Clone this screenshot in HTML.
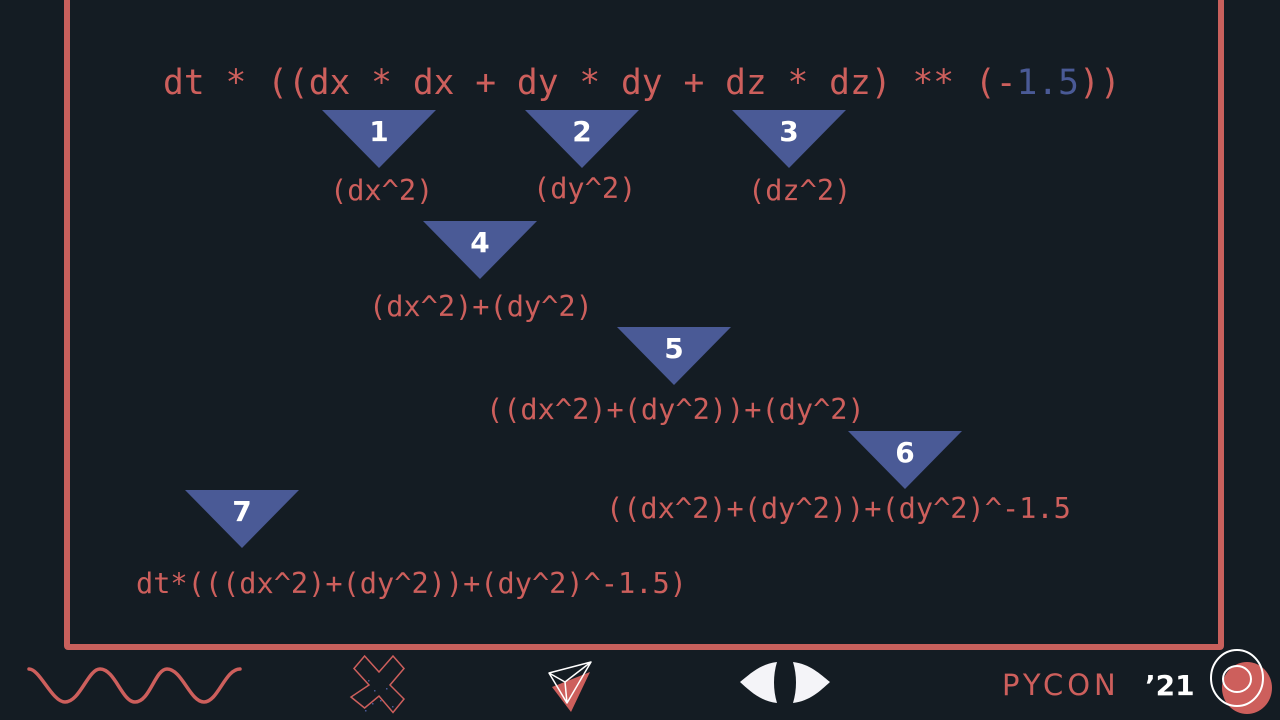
<!DOCTYPE html>
<html><head><meta charset="utf-8"><style>
html,body{margin:0;padding:0;background:#141c23;width:1280px;height:720px;overflow:hidden;position:relative;font-family:"DejaVu Sans Mono","Liberation Mono",monospace;}
.frame{position:absolute;left:64px;top:-10px;width:1148px;height:648px;border:6px solid #c8605c;border-radius:4px;}
.t{position:absolute;color:#cd5f5c;white-space:pre;line-height:1;}
.main{font-size:34.6px;left:163px;top:66px;}
.lbl{font-size:28.6px;}
.tri{position:absolute;width:0;height:0;border-left:57px solid transparent;border-right:57px solid transparent;border-top:58px solid #4a5a96;}
.n{position:absolute;width:114px;text-align:center;color:#fff;font:bold 28px "DejaVu Sans","Liberation Sans",sans-serif;}
.b{color:#4a5a96}
</style></head><body>
<div class="frame"></div>
<div class="t main">dt * ((dx * dx + dy * dy + dz * dz) ** (-<span class="b">1.5</span>))</div>

<div class="tri" style="left:322px;top:110px"></div><div class="n" style="left:322px;top:115px">1</div>
<div class="tri" style="left:525px;top:110px"></div><div class="n" style="left:525px;top:115px">2</div>
<div class="tri" style="left:732px;top:110px"></div><div class="n" style="left:732px;top:115px">3</div>
<div class="tri" style="left:423px;top:221px"></div><div class="n" style="left:423px;top:226px">4</div>
<div class="tri" style="left:617px;top:327px"></div><div class="n" style="left:617px;top:332px">5</div>
<div class="tri" style="left:848px;top:431px"></div><div class="n" style="left:848px;top:436px">6</div>
<div class="tri" style="left:185px;top:490px"></div><div class="n" style="left:185px;top:495px">7</div>

<div class="t lbl" style="left:330px;top:176px">(dx^2)</div>
<div class="t lbl" style="left:533px;top:174px">(dy^2)</div>
<div class="t lbl" style="left:748px;top:176px">(dz^2)</div>
<div class="t lbl" style="left:369px;top:292px">(dx^2)+(dy^2)</div>
<div class="t lbl" style="left:486px;top:395px">((dx^2)+(dy^2))+(dy^2)</div>
<div class="t lbl" style="left:606px;top:494px">((dx^2)+(dy^2))+(dy^2)^-1.5</div>
<div class="t lbl" style="left:136px;top:569px">dt*(((dx^2)+(dy^2))+(dy^2)^-1.5)</div>

<svg style="position:absolute;left:0;top:0" width="1280" height="720">
<path d="M29 669 C40 669 52 702 65 702 C80 702 88 669 100 669 C115 669 122 702 135 702 C150 702 155 669 167 669 C182 669 190 702 204 702 C218 702 225 669 240 669" fill="none" stroke="#cd5f5c" stroke-width="3.5" stroke-linecap="round"/>
<polygon points="364.6,656 379,672 393,656 404,668.5 390,685 404,699 393,712.5 379,696 364.6,708 351,697 369,685 354,668.5" fill="none" stroke="#cd5f5c" stroke-width="1.5"/>
<g fill="#4a5a96"><rect x="368" y="680" width="1.5" height="1.5"/><rect x="374" y="690" width="1.5" height="1.5"/><rect x="386" y="688" width="1.5" height="1.5"/><rect x="380" y="700" width="1.5" height="1.5"/><rect x="365" y="710" width="1.5" height="1.5"/><rect x="392" y="706" width="1.5" height="1.5"/><rect x="372" y="703" width="1.5" height="1.5"/></g>
<polygon points="552,687 590,672 571,712" fill="#cd5f5c"/>
<path d="M549 673 L591 662 L567 703 Z M549 673 L565 682 L591 662 M565 682 L567 703" fill="none" stroke="#fff" stroke-width="1.5" stroke-linejoin="round"/>
<path d="M777 662 C760 664 750 674 740 682 C750 691 760 701 777 703 C773 690 773 675 777 662 Z" fill="#f4f4f8"/>
<path d="M793 662 C810 664 820 674 830 682 C820 691 810 701 793 703 C797 690 797 675 793 662 Z" fill="#f4f4f8"/>
<text x="1002" y="695" font-family="DejaVu Sans,sans-serif" font-size="29" fill="#cd5f5c" letter-spacing="4">PYCON</text>
<text x="1145" y="695" font-family="DejaVu Sans,sans-serif" font-size="28" font-weight="bold" fill="#fff">’21</text>
<ellipse cx="1247" cy="688" rx="25" ry="26" fill="#cd5f5c"/>
<ellipse cx="1237" cy="678" rx="26" ry="28" fill="none" stroke="#fff" stroke-width="2"/>
<ellipse cx="1237" cy="679" rx="14" ry="13" fill="none" stroke="#fff" stroke-width="2"/>
</svg>
</body></html>
